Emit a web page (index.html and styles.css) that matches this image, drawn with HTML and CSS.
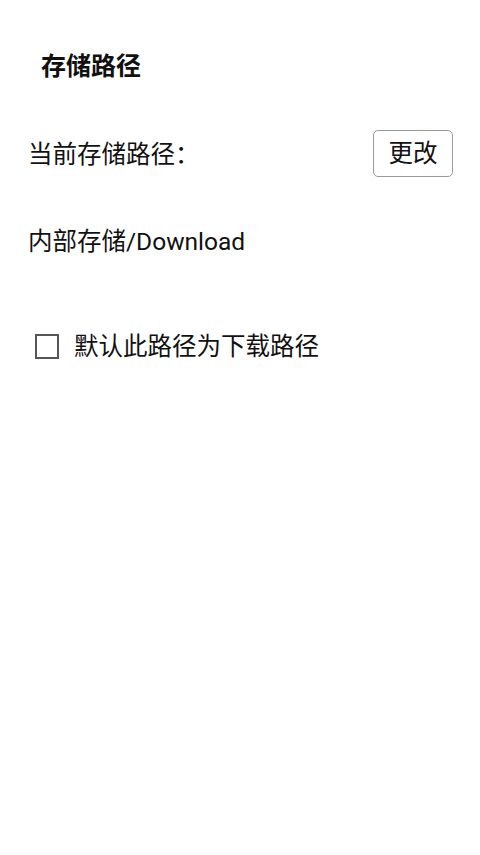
FILE: index.html
```html
<!DOCTYPE html>
<html lang="zh-CN">
<head>
<meta charset="utf-8">
<title>存储路径</title>
<link rel="stylesheet" href="styles.css">
</head>
<body>
<main class="page">
  <h1 class="title">存储路径</h1>
  <div class="current-row">
    <span class="label">当前存储路径：</span>
    <button class="change-btn" type="button">更改</button>
  </div>
  <p class="path">内部存储/Download</p>
  <label class="default-row">
    <input class="check" type="checkbox">
    <span class="check-box"></span>
    <span class="check-label">默认此路径为下载路径</span>
  </label>
</main>
</body>
</html>
```
FILE: styles.css
```css
html, body {
  margin: 0;
  padding: 0;
  background: #ffffff;
}

body {
  font-family: Roboto, "Noto Sans CJK SC", sans-serif;
  color: #111111;
  font-size: 24.5px;
  line-height: 32px;
}

.page {
  display: flex;
  flex-direction: column;
  padding: 51px 27px 0 28px;
}

.title {
  margin: 0;
  padding-left: 13px;
  font-size: 25px;
  font-weight: 700;
  line-height: 32px;
}

.current-row {
  margin-top: 47px;
  display: flex;
  align-items: center;
  justify-content: space-between;
}

.label {
  line-height: 32px;
  padding-top: 2px;
}

.change-btn {
  width: 80px;
  height: 47px;
  padding: 0;
  border: 1.5px solid #9a9a9a;
  border-radius: 5px;
  background: #ffffff;
  color: #111111;
  font-family: inherit;
  font-size: 24.5px;
  line-height: 32px;
}

.path {
  margin: 49px 0 0;
  line-height: 32px;
}

.default-row {
  margin-top: 71px;
  display: flex;
  align-items: center;
  gap: 15px;
  padding-left: 7px;
}

.check {
  display: none;
}

.check-box {
  width: 20px;
  height: 21px;
  border: 2px solid #555555;
  flex: none;
}

.check-label {
  line-height: 32px;
  padding-top: 2px;
}
```
